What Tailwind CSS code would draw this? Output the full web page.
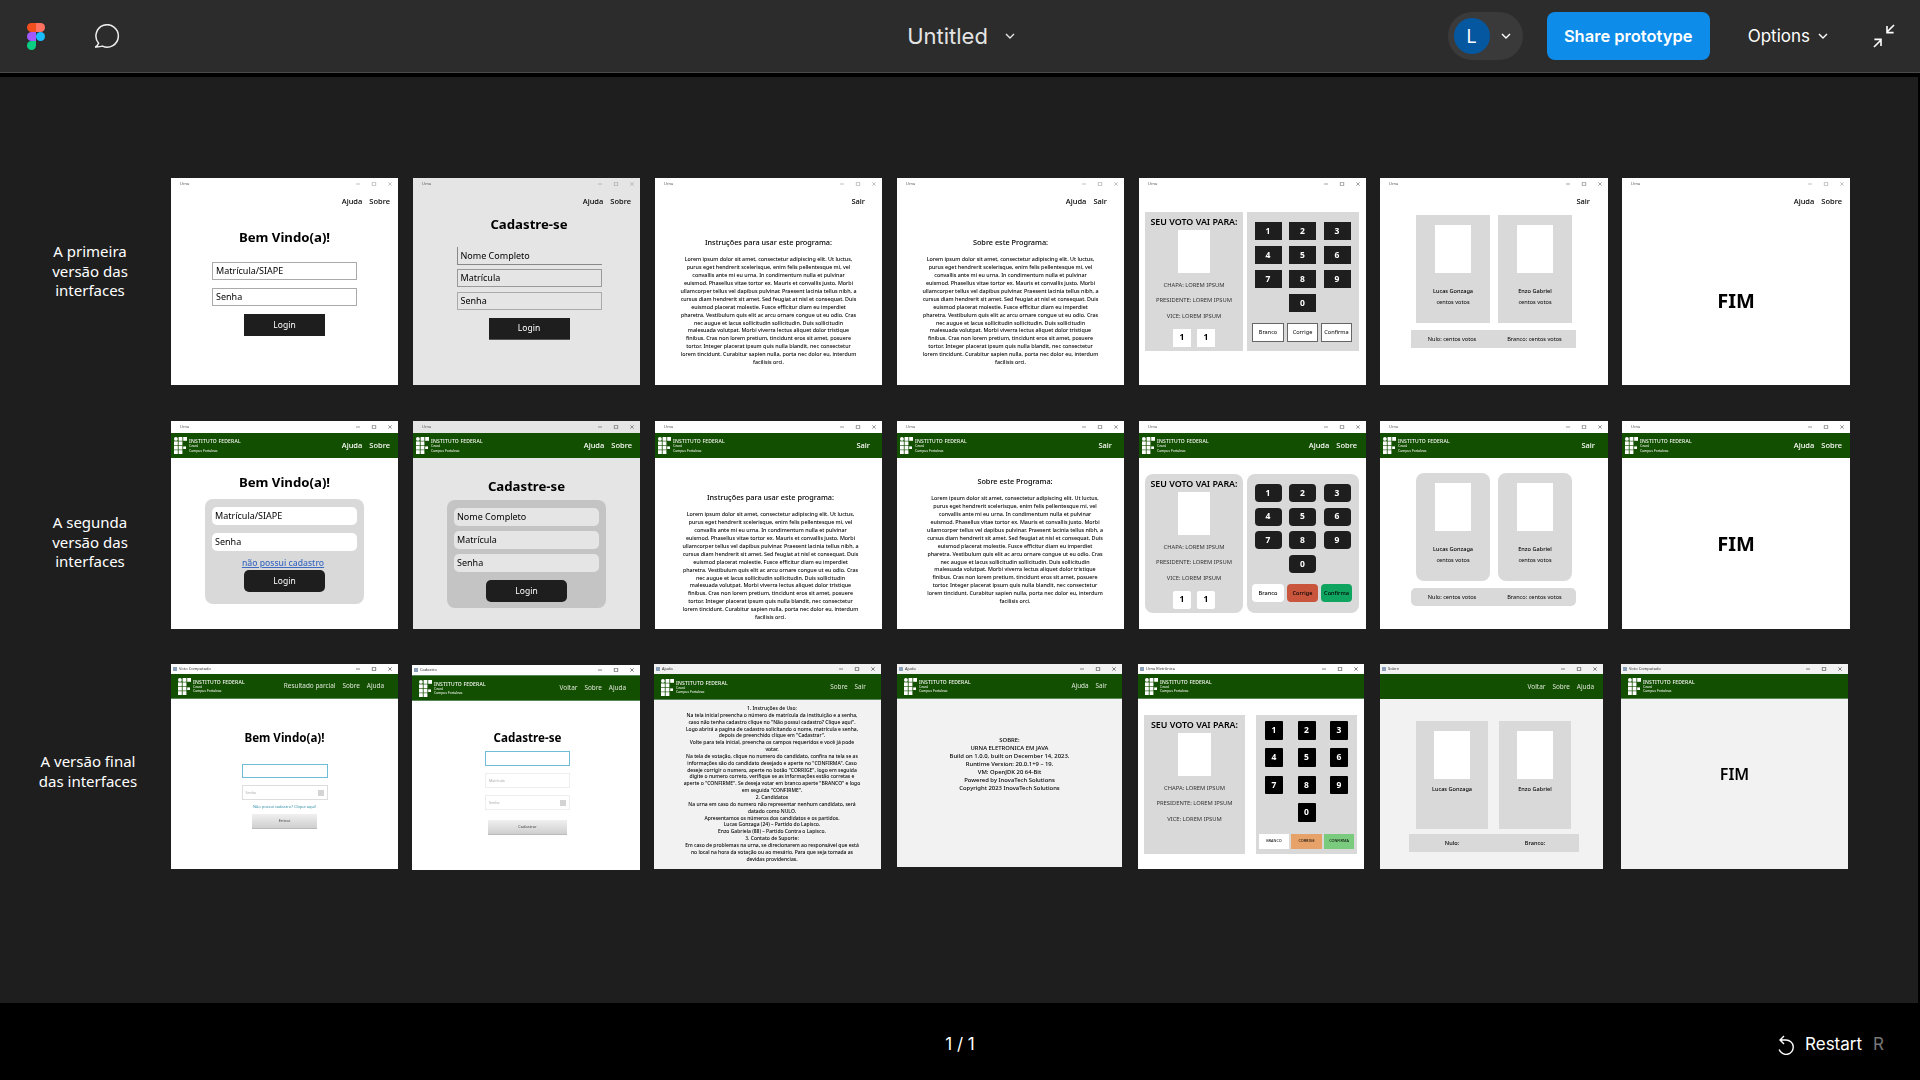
<!DOCTYPE html>
<html lang="en">

<head>
    <meta charset="UTF-8">
    <meta name="viewport" content="width=device-width, initial-scale=1.0">
    <title>Untitled</title>

    <script src="https://cdn.jsdelivr.net/npm/@tailwindcss/browser@4"></script>
</head>

<body class="bg-black">
    <main class="h-screen flex flex-col overflow-hidden font-['Inter',sans-serif]">

        <!-- top bar -->
        <header class="h-[73px] shrink-0 bg-[#2c2c2c] border-b border-[#4a4a4a] grid grid-cols-[1fr_auto_1fr] items-center">
            <div class="flex items-center gap-[49px] pl-[27px]">
                <svg viewBox="0 0 18 27" class="w-[18px] h-[27px]">
                    <path fill="#f24e1e" d="M9 0H4.5a4.5 4.5 0 0 0 0 9H9z" />
                    <path fill="#ff7262" d="M9 0h4.5a4.5 4.5 0 0 1 0 9H9z" />
                    <path fill="#a259ff" d="M9 9H4.5a4.5 4.5 0 0 0 0 9H9z" />
                    <circle fill="#1abcfe" cx="13.5" cy="13.5" r="4.5" />
                    <path fill="#0acf83" d="M4.5 18H9v4.5a4.5 4.5 0 1 1-4.5-4.5z" />
                </svg>
                <svg viewBox="0 0 28 24" class="w-[28px] h-[24px]" fill="none" stroke="#eeeeee" stroke-width="1.5">
                    <path d="M4.6 19.2A11.2 11.2 0 1 1 8.4 22.1C6 22.9 3.5 23 1.2 23.2 2.8 22.2 4 20.8 4.6 19.2z" />
                </svg>
            </div>
            <div class="flex items-center gap-[17px] pl-[2px] text-[#e4e4e4]">
                <span class="text-[22px]">Untitled</span>
                <svg viewBox="0 0 10 6" class="w-[10px] h-[6px]" fill="none" stroke="currentColor" stroke-width="1.4"><path d="M1 1l4 4 4-4" /></svg>
            </div>
            <div class="flex items-center justify-end pr-[24px] text-white">
                <div class="w-[75px] h-[48px] rounded-full bg-[#3a3a3a] flex items-center pl-[6px]">
                    <div class="w-[36px] h-[36px] rounded-full bg-[#0557a0] flex items-center justify-center text-[18px]">L</div>
                    <svg viewBox="0 0 10 6" class="w-[10px] h-[6px] ml-[11px]" fill="none" stroke="currentColor" stroke-width="1.4"><path d="M1 1l4 4 4-4" /></svg>
                </div>
                <button class="w-[163px] h-[48px] ml-[24px] rounded-[8px] bg-[#0d8ce9] text-[16.5px] font-semibold">Share prototype</button>
                <span class="ml-[38px] pt-[2px] text-[17px]">Options</span>
                <svg viewBox="0 0 10 6" class="w-[10px] h-[6px] ml-[8px]" fill="none" stroke="currentColor" stroke-width="1.4"><path d="M1 1l4 4 4-4" /></svg>
                <svg viewBox="0 0 24 24" class="w-[24px] h-[24px] ml-[44px]" fill="none" stroke="currentColor" stroke-width="1.6">
                    <path d="M22 1l-7 7M15 2v6.6h6.6M2 23l7-7M9 22v-6.6H2.4" />
                </svg>
            </div>
        </header>

        <!-- prototype canvas -->
        <section id="canvas" class="relative flex-1 mt-[4px] mr-[2px] bg-[#1e1e1e] overflow-hidden font-['Noto_Sans',sans-serif] text-black">
            <p class="absolute left-[20px] top-[165px] w-[140px] text-center text-white text-[15px] leading-[19.5px]">A primeira<br>versão das<br>interfaces</p>
            <p class="absolute left-[20px] top-[436px] w-[140px] text-center text-white text-[15px] leading-[19.5px]">A segunda<br>versão das<br>interfaces</p>
            <p class="absolute left-[18px] top-[675px] w-[140px] text-center text-white text-[15px] leading-[19.5px]">A versão final<br>das interfaces</p>
        </section>

        <!-- bottom bar -->
        <footer class="h-[77px] shrink-0 bg-black grid grid-cols-[1fr_auto_1fr] items-center pt-[6px] text-white text-[17px]">
            <div></div>
            <span>1 / 1</span>
            <div class="flex items-center justify-end pr-[36px]">
                <svg viewBox="0 0 18 20" class="w-[18px] h-[20px]" fill="none" stroke="currentColor" stroke-width="1.4">
                    <path d="M7 1L3 5l4 4M3 5h6a7.2 7.2 0 1 1-6.8 9.5" />
                </svg>
                <span class="ml-[10px]">Restart</span>
                <span class="ml-[11px] text-[#777777]">R</span>
            </div>
        </footer>
    </main>

    <script>
        const lorem = `Lorem ipsum dolor sit amet, consectetur adipiscing elit. Ut luctus,<br>purus eget hendrerit scelerisque, enim felis pellentesque mi, vel<br>convallis ante mi eu urna. In condimentum nulla et pulvinar<br>euismod. Phasellus vitae tortor ex. Mauris et convallis justo. Morbi<br>ullamcorper tellus vel dapibus pulvinar. Praesent lacinia tellus nibh, a<br>cursus diam hendrerit sit amet. Sed feugiat at nisl et consequat. Duis<br>euismod placerat molestie. Fusce efficitur diam eu imperdiet<br>pharetra. Vestibulum quis elit ac arcu ornare congue ut eu odio. Cras<br>nec augue et lacus sollicitudin sollicitudin. Duis sollicitudin<br>malesuada volutpat. Morbi viverra lectus aliquet dolor tristique<br>finibus. Cras non lorem pretium, tincidunt eros sit amet, posuere<br>tortor. Integer placerat ipsum quis nulla blandit, nec consectetur<br>lorem tincidunt. Curabitur sapien nulla, porta nec dolor eu, interdum<br>facilisis orci.`

        const logo = `<svg viewBox="0 0 13 17" class="w-[13px] h-[17px] shrink-0" fill="white"><circle cx="1.9" cy="1.9" r="1.9"/><rect x="4.6" width="3.8" height="3.8"/><rect x="9.2" width="3.8" height="3.8"/><rect y="4.4" width="3.8" height="3.8"/><rect x="4.6" y="4.4" width="3.8" height="3.8"/><rect y="8.8" width="3.8" height="3.8"/><rect x="4.6" y="8.8" width="3.8" height="3.8"/><rect x="9.2" y="9.4" width="2.8" height="2.6"/><rect y="13.2" width="3.8" height="3.8"/><rect x="4.6" y="13.2" width="3.8" height="3.8"/></svg>`

        const brand = `<div class="ml-[2px] flex flex-col text-white leading-[4.4px]"><span class="text-[5px] leading-[6px] font-medium tracking-[0.2px]">INSTITUTO FEDERAL</span><span class="text-[3.4px]">Ceará</span><span class="text-[3.4px]">Campus Fortaleza</span></div>`

        // title bars
        const controls = (color) => `<svg viewBox="0 0 36 4" class="ml-auto w-[36px] h-[4px] ${color}" fill="none" stroke="currentColor" stroke-width="0.6"><path d="M0 2h4M16.3.3h3.4v3.4h-3.4zM32.3.3l3.4 3.4M35.7.3l-3.4 3.4"/></svg>`
        const titleBar = (color) => `<div class="h-[12px] shrink-0 flex items-center pl-[9px] pr-[6px] text-[4px] text-[#555555]"><span>Urna</span>${controls(color)}</div>`
        const appBar = (title, color) => `<div class="h-[10px] shrink-0 flex items-center pl-[2px] pr-[6px] text-[4px] text-[#333333]"><span class="w-[4px] h-[4px] bg-[#8aa0b8] mr-[2px]"></span><span>${title}</span>${controls(color)}</div>`

        // nav links
        const topNav = (links, pad) => `<nav class="h-[24px] shrink-0 flex justify-end items-center gap-[7px] text-[7.5px] font-medium ${pad}">${links.map(l => `<span>${l}</span>`).join('')}</nav>`
        const greenBar = (links, pad) => `<div class="h-[25px] shrink-0 bg-[#134f00] flex items-center pl-[3px] ${pad} text-white">${logo}${brand}<nav class="ml-auto flex gap-[7px] text-[7.5px] font-medium">${links.map(l => `<span>${l}</span>`).join('')}</nav></div>`
        const appHeader = (links, pad) => `<div class="h-[25px] shrink-0 bg-[#134f00] border-b border-[#58875a] flex items-center pl-[7px] ${pad} text-white/85">${logo}${brand}<nav class="ml-auto flex gap-[7px] text-[6.4px]">${links.map(l => `<span>${l}</span>`).join('')}</nav></div>`
        const appHeaderPlain = (links, pad) => `<div class="h-[25px] shrink-0 bg-[#134f00] flex items-center ${pad} text-white/85"><nav class="ml-auto flex gap-[7px] text-[6.4px]">${links.map(l => `<span>${l}</span>`).join('')}</nav></div>`

        const field = (label, cls) => `<div class="w-[145px] h-[18px] flex items-center pl-[3px] text-[9px] ${cls}">${label}</div>`
        const loginBtn = (cls) => `<button class="w-[81px] h-[22px] bg-[#1e1e1e] text-white text-[8.5px] ${cls}">Login</button>`

        const keypad = (keyCls, gridCls) => `<div class="grid ${gridCls}">${[1, 2, 3, 4, 5, 6, 7, 8, 9].map(n => `<div class="flex items-center justify-center text-white text-[8.5px] font-bold ${keyCls}">${n}</div>`).join('')}<div class="col-start-2 flex items-center justify-center text-white text-[8.5px] font-bold ${keyCls}">0</div></div>`

        const voteInfo = `<p class="mt-[9px] text-[5.8px] leading-[6px] text-[#333333]">CHAPA: LOREM IPSUM</p><p class="mt-[9.4px] text-[5.8px] leading-[6px] text-[#333333]">PRESIDENTE: LOREM IPSUM</p><p class="mt-[9.4px] text-[5.8px] leading-[6px] text-[#333333]">VICE: LOREM IPSUM</p>`

        const votePanel = (panelCls, boxCls) => `<div class="w-[98px] h-[139px] bg-[#d9d9d9] flex flex-col items-center ${panelCls}">
            <p class="mt-[4px] text-[8.9px] leading-[11px] font-semibold">SEU VOTO VAI PARA:</p>
            <div class="mt-[3px] w-[32px] h-[43px] bg-white"></div>
            ${voteInfo}
            <div class="mt-[10px] flex gap-[6px]">
                <div class="w-[18px] h-[18px] bg-white flex items-center justify-center text-[8.5px] font-bold ${boxCls}">1</div>
                <div class="w-[18px] h-[18px] bg-white flex items-center justify-center text-[8.5px] font-bold ${boxCls}">1</div>
            </div>
        </div>`

        const candidate = (name, cls, nameCls, extra) => `<div class="h-[108px] bg-[#d9d9d9] flex flex-col items-center ${cls}">
            <div class="mt-[10px] w-[36px] h-[47.6px] bg-white"></div>
            <p class="text-[5.6px] leading-[8px] font-medium ${nameCls}">${name}</p>
            ${extra}
        </div>`
        const votes = `<p class="mt-[3.4px] text-[5.6px] leading-[8px]">centos votos</p>`

        const resultBar = (cls) => `<div class="w-[165px] h-[18px] ml-[-5px] bg-[#d9d9d9] flex items-center text-[5.6px] ${cls}"><span class="w-[82px] text-center">Nulo: centos votos</span><span class="w-[83px] text-center">Branco: centos votos</span></div>`

        const screens = [
            // primeira versao
            {
                cls: 'left-[171px] top-[101px] w-[227px] h-[207px] bg-white', body: `${titleBar('text-[#999999]')}${topNav(['Ajuda', 'Sobre'], 'pr-[8px]')}
                <div class="flex flex-col items-center">
                    <h2 class="mt-[14px] text-[13.2px] leading-[18px] font-bold">Bem Vindo(a)!</h2>
                    ${field('Matrícula/SIAPE', 'mt-[16px] border border-[#aaaaaa]')}
                    ${field('Senha', 'mt-[8px] border border-[#aaaaaa]')}
                    ${loginBtn('mt-[8px]')}
                </div>`
            },
            {
                cls: 'left-[413px] top-[101px] w-[227px] h-[207px] bg-[#e5e5e5]', body: `${titleBar('text-[#999999]')}${topNav(['Ajuda', 'Sobre'], 'pr-[9px]')}
                <div class="flex flex-col items-center pl-[5px]">
                    <h2 class="mt-[1px] text-[13.2px] leading-[18px] font-bold">Cadastre-se</h2>
                    ${field('Nome Completo', 'mt-[14px] border-l border-b border-[#888888]')}
                    ${field('Matrícula', 'mt-[4px] border border-[#999999]')}
                    ${field('Senha', 'mt-[5px] border border-[#aaaaaa]')}
                    ${loginBtn('mt-[8px] border-b border-[#555555]')}
                </div>`
            },
            {
                cls: 'left-[655px] top-[101px] w-[227px] h-[207px] bg-white', body: `${titleBar('text-[#999999]')}${topNav(['Sair'], 'pr-[17px]')}
                <h3 class="mt-[24px] text-center text-[7.3px] leading-[8px] font-medium">Instruções para usar este programa:</h3>
                <p class="mt-[10px] text-center text-[5.35px] leading-[7.93px] font-medium whitespace-nowrap">${lorem}</p>`
            },
            {
                cls: 'left-[897px] top-[101px] w-[227px] h-[207px] bg-white', body: `${titleBar('text-[#999999]')}${topNav(['Ajuda', 'Sair'], 'pr-[17px]')}
                <h3 class="mt-[24px] text-center text-[7.3px] leading-[8px] font-medium">Sobre este Programa:</h3>
                <p class="mt-[10px] text-center text-[5.35px] leading-[7.93px] font-medium whitespace-nowrap">${lorem}</p>`
            },
            {
                cls: 'left-[1139px] top-[101px] w-[227px] h-[207px] bg-white', body: `${titleBar('text-[#666666]')}
                <div class="mt-[22px] pl-[6px] flex gap-[4px]">
                    ${votePanel('', '')}
                    <div class="w-[112px] h-[139px] bg-[#d9d9d9] pt-[10px] px-[5px]">
                        ${keypad('h-[18px] bg-[#1e1e1e]', 'grid-cols-[27px_27px_27px] gap-x-[7.5px] gap-y-[6px] ml-[2.5px]')}
                        <div class="mt-[11px] flex gap-[3px] text-[5.6px]">
                            <div class="w-[32px] h-[19px] bg-white border border-[#666666] flex items-center justify-center">Branco</div>
                            <div class="w-[31px] h-[19px] bg-white border border-[#666666] flex items-center justify-center">Corrige</div>
                            <div class="w-[31px] h-[19px] bg-white border border-[#666666] flex items-center justify-center">Confirma</div>
                        </div>
                    </div>
                </div>`
            },
            {
                cls: 'left-[1380px] top-[101px] w-[228px] h-[207px] bg-white', body: `${titleBar('text-[#666666]')}${topNav(['Sair'], 'pr-[18px]')}
                <div class="mt-[1px] pl-[36px] flex gap-[8px]">${candidate('Lucas Gonzaga', 'w-[74px]', 'mt-[14px]', votes)}${candidate('Enzo Gabriel', 'w-[74px]', 'mt-[14px]', votes)}</div>
                <div class="mt-[7px] pl-[36px]">${resultBar('')}</div>`
            },
            {
                cls: 'left-[1622px] top-[101px] w-[228px] h-[207px] bg-white', body: `${titleBar('text-[#999999]')}${topNav(['Ajuda', 'Sobre'], 'pr-[8px]')}
                <p class="mt-[74px] text-center text-[20px] leading-[26px] font-bold">FIM</p>`
            },

            // segunda versao
            {
                cls: 'left-[171px] top-[344px] w-[227px] h-[208px] bg-white', body: `${titleBar('text-[#555555]')}${greenBar(['Ajuda', 'Sobre'], 'pr-[8px]')}
                <div class="flex flex-col items-center">
                    <h2 class="mt-[15px] text-[13.2px] leading-[18px] font-bold">Bem Vindo(a)!</h2>
                    <div class="mt-[8px] w-[159px] h-[105px] rounded-[8px] bg-[#d9d9d9] flex flex-col items-center pt-[8px]">
                        ${field('Matrícula/SIAPE', 'bg-white rounded-[5px]')}
                        ${field('Senha', 'mt-[8px] bg-white rounded-[5px]')}
                        <p class="mt-[8px] pr-[3px] text-[8.6px] leading-[8px] font-medium text-[#3b6ac0] underline">não possui cadastro</p>
                        ${loginBtn('mt-[3px] rounded-[5px]')}
                    </div>
                </div>`
            },
            {
                cls: 'left-[413px] top-[344px] w-[227px] h-[208px] bg-[#e5e5e5]', body: `${titleBar('text-[#555555]')}${greenBar(['Ajuda', 'Sobre'], 'pr-[8px]')}
                <div class="flex flex-col items-center">
                    <h2 class="mt-[19px] text-[13.2px] leading-[18px] font-bold">Cadastre-se</h2>
                    <div class="mt-[5px] w-[159px] h-[108px] rounded-[8px] bg-[#c4c4c4] flex flex-col items-center pt-[8px]">
                        ${field('Nome Completo', 'bg-[#e5e5e5] rounded-[5px]')}
                        ${field('Matrícula', 'mt-[5px] bg-[#e5e5e5] rounded-[5px]')}
                        ${field('Senha', 'mt-[5px] bg-[#e5e5e5] rounded-[5px]')}
                        ${loginBtn('mt-[8px] rounded-[5px]')}
                    </div>
                </div>`
            },
            {
                cls: 'left-[655px] top-[344px] w-[227px] h-[208px] bg-white', body: `${titleBar('text-[#555555]')}${greenBar(['Sair'], 'pr-[12px]')}
                <h3 class="mt-[35px] pl-[4px] text-center text-[7.3px] leading-[8px] font-medium">Instruções para usar este programa:</h3>
                <p class="mt-[10px] pl-[4px] text-center text-[5.35px] leading-[7.93px] font-medium whitespace-nowrap">${lorem}</p>`
            },
            {
                cls: 'left-[897px] top-[344px] w-[227px] h-[208px] bg-white', body: `${titleBar('text-[#555555]')}${greenBar(['Sair'], 'pr-[12px]')}
                <h3 class="mt-[19px] pl-[9px] text-center text-[7.3px] leading-[8px] font-medium">Sobre este Programa:</h3>
                <p class="mt-[10px] pl-[9px] text-center text-[5.35px] leading-[7.93px] font-medium whitespace-nowrap">${lorem}</p>`
            },
            {
                cls: 'left-[1139px] top-[344px] w-[227px] h-[208px] bg-white', body: `${titleBar('text-[#555555]')}${greenBar(['Ajuda', 'Sobre'], 'pr-[9px]')}
                <div class="mt-[16px] pl-[6px] flex gap-[4px]">
                    ${votePanel('rounded-[8px]', 'rounded-[2px]')}
                    <div class="w-[112px] h-[139px] rounded-[8px] bg-[#d9d9d9] pt-[10px] px-[5px]">
                        ${keypad('h-[18px] rounded-[4px] bg-[#1e1e1e]', 'grid-cols-[27px_27px_27px] gap-x-[7.5px] gap-y-[5.7px] ml-[2.5px]')}
                        <div class="mt-[11px] flex gap-[3px] text-[5.6px] font-medium">
                            <div class="w-[32px] h-[18px] rounded-[4px] bg-white flex items-center justify-center">Branco</div>
                            <div class="w-[31px] h-[18px] rounded-[4px] bg-[#c9553d] flex items-center justify-center">Corrige</div>
                            <div class="w-[31px] h-[18px] rounded-[4px] bg-[#0fa561] flex items-center justify-center">Confirma</div>
                        </div>
                    </div>
                </div>`
            },
            {
                cls: 'left-[1380px] top-[344px] w-[228px] h-[208px] bg-white', body: `${titleBar('text-[#555555]')}${greenBar(['Sair'], 'pr-[13px]')}
                <div class="mt-[15px] pl-[36px] flex gap-[8px]">${candidate('Lucas Gonzaga', 'w-[74px] rounded-[8px]', 'mt-[14px]', votes)}${candidate('Enzo Gabriel', 'w-[74px] rounded-[8px]', 'mt-[14px]', votes)}</div>
                <div class="mt-[7px] pl-[36px]">${resultBar('rounded-[5px]')}</div>`
            },
            {
                cls: 'left-[1622px] top-[344px] w-[228px] h-[208px] bg-white', body: `${titleBar('text-[#555555]')}${greenBar(['Ajuda', 'Sobre'], 'pr-[8px]')}
                <p class="mt-[73px] text-center text-[20px] leading-[26px] font-bold">FIM</p>`
            },

            // versao final
            {
                cls: 'left-[171px] top-[587px] w-[227px] h-[205px] bg-white', body: `${appBar('Voto Computado', 'text-[#333333]')}${appHeader(['Resultado parcial', 'Sobre', 'Ajuda'], 'pr-[14px]')}
                <div class="flex flex-col items-center">
                    <h2 class="mt-[31px] text-[11.6px] leading-[16px] font-bold">Bem Vindo(a)!</h2>
                    <div class="mt-[18px] w-[86px] h-[14px] border border-[#6fbcd6]"></div>
                    <div class="mt-[7px] w-[86px] h-[15px] border border-[#dddddd] flex items-center pl-[3px] pr-[3px] text-[3.6px] text-[#aaaaaa]"><span>Senha</span><span class="ml-auto w-[6px] h-[6px] bg-[#d4d4d4]"></span></div>
                    <p class="mt-[4px] text-[4px] leading-[6px] text-[#2f8fa5]">Não possui cadastro? Clique aqui!</p>
                    <button class="mt-[4px] w-[65px] h-[15px] bg-linear-to-b from-[#f0f0f0] to-[#cfcfcf] border-b border-[#bbbbbb] text-[4px] text-[#444444]">Entrar</button>
                </div>`
            },
            {
                cls: 'left-[412px] top-[588px] w-[228px] h-[205px] bg-white', body: `${appBar('Cadastro', 'text-[#333333]')}<div class="h-[1px] bg-[#58875a]"></div>${appHeader(['Voltar', 'Sobre', 'Ajuda'], 'pr-[14px]')}
                <div class="flex flex-col items-center pl-[3px]">
                    <h2 class="mt-[29px] text-[11.6px] leading-[16px] font-bold">Cadastre-se</h2>
                    <div class="mt-[5px] w-[85px] h-[15px] border border-[#6fbcd6]"></div>
                    <div class="mt-[7px] w-[85px] h-[15px] border border-[#eeeeee] flex items-center pl-[3px] text-[3.6px] text-[#aaaaaa]">Matrícula</div>
                    <div class="mt-[7px] w-[85px] h-[15px] border border-[#eeeeee] flex items-center pl-[3px] pr-[3px] text-[3.6px] text-[#aaaaaa]"><span>Senha</span><span class="ml-auto w-[6px] h-[6px] bg-[#d4d4d4]"></span></div>
                    <button class="mt-[10px] w-[79px] h-[15px] bg-linear-to-b from-[#f0f0f0] to-[#cfcfcf] border-b border-[#bbbbbb] text-[4px] text-[#444444]">Cadastrar</button>
                </div>`
            },
            {
                cls: 'left-[654px] top-[587px] w-[227px] h-[205px] bg-[#f2f2f2]', body: `${appBar('Ajuda', 'text-[#333333]')}<div class="h-[1px] bg-[#134f00]"></div>${appHeader(['Sobre', 'Sair'], 'pr-[15px]')}
                <p class="mt-[5px] pl-[9px] text-center text-[5px] leading-[6.85px] font-medium whitespace-nowrap">1. Instruções de Uso:<br>Na tela inicial preencha o número de matrícula da instituição e a senha,<br>caso não tenha cadastro clique no "Não possui cadastro? Clique aqui".<br>Logo abrirá a pagina de cadastro solicitando o nome, matrícula e senha,<br>depois de preenchido clique em "Cadastrar".<br>Volte para tela inicial, preencha os campos requeridos e você já pode<br>votar.<br>Na tela de votação, clique no numero do candidato, confira na tela se as<br>informações são do candidato desejado e aperte no "CONFIRMA". Caso<br>deseje corrigir o numero, aperte no botão "CORRIGE", logo em seguida<br>digite o numero correto, verifique se as informações estão corretas e<br>aperte o "CONFIRME". Se deseja votar em branco aperte "BRANCO" e logo<br>em seguida "CONFIRME".<br>2. Candidatos<br>Na urna em caso do numero não representar nenhum candidato, será<br>datado como NULO.<br>Apresentamos os números dos candidatos e os partidos.<br>Lucas Gonzaga (24) – Partido do Lapisco.<br>Enzo Gabriela (88) – Partido Contra o Lapisco.<br>3. Contato de Suporte:<br>Em caso de problemas na urna, se direcionarem ao responsável que está<br>no local na hora da votação ou ao mesário. Para que seja tomada as<br>devidas providencias.</p>`
            },
            {
                cls: 'left-[897px] top-[587px] w-[225px] h-[203px] bg-[#f2f2f2]', body: `${appBar('Ajuda', 'text-[#333333]')}${appHeader(['Ajuda', 'Sair'], 'pr-[15px]')}
                <p class="mt-[37px] text-center text-[5.9px] leading-[8px] font-medium whitespace-nowrap">SOBRE:<br>URNA ELETRONICA EM JAVA<br>Build on 1.0.0, built on December 14, 2023.<br>Runtime Version: 20.0.1+9 – 19.<br>VM: OpenJDK 20 64-Bit<br>Powered by InovaTech Solutions<br>Copyright  2023 InovaTech Solutions</p>`
            },
            {
                cls: 'left-[1138px] top-[587px] w-[226px] h-[205px] bg-white', body: `${appBar('Urna Eletrônica', 'text-[#333333]')}${appHeader([], 'pr-[14px]')}
                <div class="mt-[16px] pl-[6px] flex gap-[11px]">
                    <div class="w-[101px] h-[139px] bg-[#d9d9d9] flex flex-col items-center">
                        <p class="mt-[4px] text-[8.9px] leading-[11px] font-semibold">SEU VOTO VAI PARA:</p>
                        <div class="mt-[3px] w-[33px] h-[43px] bg-white"></div>
                        ${voteInfo}
                    </div>
                    <div class="w-[101px] h-[139px] bg-[#d9d9d9] pt-[6.3px]">
                        ${keypad('h-[18.7px] rounded-[1px] bg-black', 'grid-cols-[18px_18px_18px] gap-x-[14.5px] gap-y-[8.5px] ml-[9px]')}
                        <div class="mt-[12px] ml-[3px] flex gap-[2px] text-[3.8px]">
                            <div class="w-[30px] h-[15px] bg-white flex items-center justify-center">BRANCO</div>
                            <div class="w-[31px] h-[15px] bg-[#e6a268] flex items-center justify-center">CORRIGE</div>
                            <div class="w-[30px] h-[15px] bg-[#7acb7d] flex items-center justify-center">CONFIRMA</div>
                        </div>
                    </div>
                </div>`
            },
            {
                cls: 'left-[1380px] top-[587px] w-[223px] h-[205px] bg-[#f2f2f2]', body: `${appBar('Sobre', 'text-[#333333]')}${appHeaderPlain(['Voltar', 'Sobre', 'Ajuda'], 'pr-[9px]')}
                <div class="mt-[22px] pl-[36px] flex gap-[11px]">
                    ${candidate('Lucas Gonzaga', 'w-[72px]', 'mt-[6px]', '')}${candidate('Enzo Gabriel', 'w-[72px]', 'mt-[6px]', '')}
                </div>
                <div class="mt-[5px] ml-[29px] w-[170px] h-[18px] bg-[#d9d9d9] flex items-center text-[5.6px] font-medium"><span class="w-[86px] text-center">Nulo:</span><span class="w-[80px] text-center">Branco:</span></div>`
            },
            {
                cls: 'left-[1621px] top-[587px] w-[227px] h-[205px] bg-[#f2f2f2]', body: `${appBar('Voto Computado', 'text-[#333333]')}${appHeader([], 'pr-[14px]')}
                <p class="mt-[64px] text-center text-[16px] leading-[22px] font-semibold">FIM</p>`
            },
        ]

        const canvas = document.querySelector('#canvas')
        screens.forEach(s => {
            canvas.insertAdjacentHTML('beforeend', `<article class="absolute flex flex-col overflow-hidden blur-[0.3px] ${s.cls}">${s.body}</article>`)
        })
    </script>
</body>

</html>
